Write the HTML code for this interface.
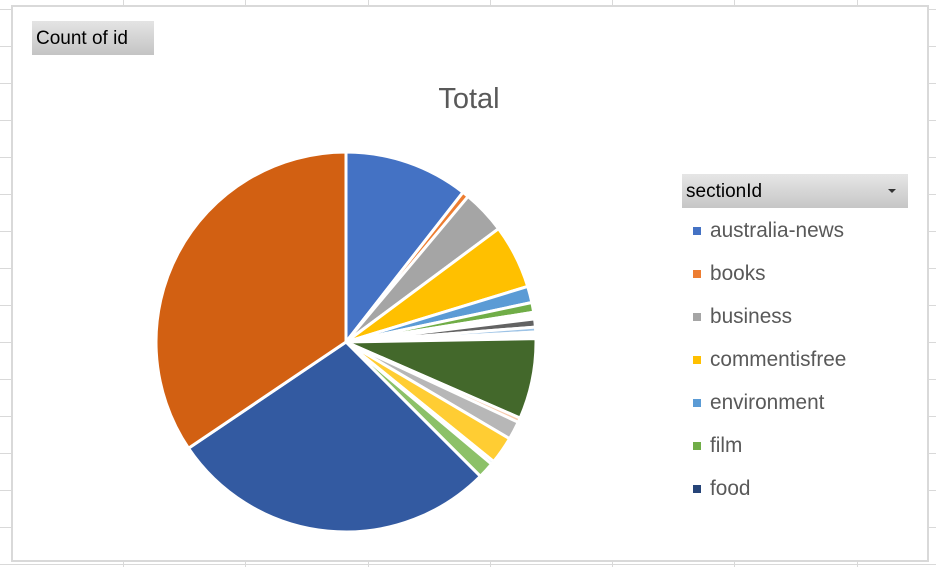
<!DOCTYPE html>
<html><head><meta charset="utf-8"><style>
html,body{margin:0;padding:0;background:#fff;}
body{width:936px;height:567px;position:relative;overflow:hidden;font-family:"Liberation Sans",sans-serif;}
.grid{position:absolute;left:0;top:0;}
.frame{position:absolute;left:11px;top:5px;width:914px;height:553px;border:2px solid #d9d9d9;background:#fff;}
.cnt{position:absolute;left:32px;top:21px;width:122px;height:34px;background:linear-gradient(#e4e4e4,#c4c4c4);font-size:19px;line-height:36px;padding-left:4px;box-sizing:border-box;color:#000;}
.title{position:absolute;left:369px;width:200px;text-align:center;top:83px;font-size:29px;color:#595959;}
.lh{position:absolute;left:682px;top:174px;width:226px;height:34px;background:linear-gradient(#e6e6e6,#c6c6c6);font-size:19px;line-height:35px;padding-left:4px;box-sizing:border-box;color:#000;}
.lh i{position:absolute;right:12px;top:15px;border-left:4px solid transparent;border-right:4px solid transparent;border-top:4px solid #333;}
.li{position:absolute;left:693px;font-size:20.8px;color:#595959;height:24px;line-height:24px;}
.li b{display:inline-block;width:8px;height:8px;margin-right:9px;vertical-align:middle;position:relative;top:-1px;}
</style></head><body>
<svg class="grid" width="936" height="567">
<g stroke="#d9d9d9" stroke-width="1">
<line x1="123.5" y1="0" x2="123.5" y2="567"/><line x1="245.5" y1="0" x2="245.5" y2="567"/><line x1="368.5" y1="0" x2="368.5" y2="567"/><line x1="490.5" y1="0" x2="490.5" y2="567"/><line x1="612.5" y1="0" x2="612.5" y2="567"/><line x1="734.5" y1="0" x2="734.5" y2="567"/><line x1="857.5" y1="0" x2="857.5" y2="567"/>
<line x1="0" y1="9.5" x2="936" y2="9.5"/><line x1="0" y1="46.5" x2="936" y2="46.5"/><line x1="0" y1="83.5" x2="936" y2="83.5"/><line x1="0" y1="120.5" x2="936" y2="120.5"/><line x1="0" y1="157.5" x2="936" y2="157.5"/><line x1="0" y1="194.5" x2="936" y2="194.5"/><line x1="0" y1="231.5" x2="936" y2="231.5"/><line x1="0" y1="268.5" x2="936" y2="268.5"/><line x1="0" y1="305.5" x2="936" y2="305.5"/><line x1="0" y1="342.5" x2="936" y2="342.5"/><line x1="0" y1="379.5" x2="936" y2="379.5"/><line x1="0" y1="416.5" x2="936" y2="416.5"/><line x1="0" y1="453.5" x2="936" y2="453.5"/><line x1="0" y1="490.5" x2="936" y2="490.5"/><line x1="0" y1="527.5" x2="936" y2="527.5"/><line x1="0" y1="564.5" x2="936" y2="564.5"/>
</g></svg>
<div class="frame"></div>
<div class="cnt">Count of id</div>
<div class="title">Total</div>
<svg style="position:absolute;left:0;top:0" width="936" height="567" id="pie"></svg>
<div class="lh">sectionId<i></i></div>
<div class="li" style="top:219px"><b style="background:#4472c4"></b>australia-news</div>
<div class="li" style="top:262px"><b style="background:#ed7d31"></b>books</div>
<div class="li" style="top:305px"><b style="background:#a5a5a5"></b>business</div>
<div class="li" style="top:348px"><b style="background:#ffc000"></b>commentisfree</div>
<div class="li" style="top:391px"><b style="background:#5b9bd5"></b>environment</div>
<div class="li" style="top:434px"><b style="background:#70ad47"></b>film</div>
<div class="li" style="top:477px"><b style="background:#264478"></b>food</div>
<script>
var s=[[0,38,"#4472c4"],[38,40,"#ed7d31"],[40,53.4,"#a5a5a5"],[53.4,73,"#ffc000"],[73,78,"#5b9bd5"],[78,81,"#70ad47"],[81,83,"#fff"],[83,85.5,"#636363"],[85.5,87,"#9dc3e6"],[87,89,"#fff"],[89,113.6,"#43682b"],[113.6,115,"#f8cbad"],[115,120.6,"#b7b7b7"],[120.6,129,"#ffcd33"],[129,130,"#bdd7ee"],[130,135,"#8cc168"],[135,236,"#335aa1"],[236,360,"#d26012"]];
var cx=346,cy=342,r=190,h="";
function p(a){a=a*Math.PI/180;return (cx+r*Math.sin(a)).toFixed(2)+" "+(cy-r*Math.cos(a)).toFixed(2);}
s.forEach(function(x){h+='<path d="M'+cx+' '+cy+' L'+p(x[0])+' A'+r+' '+r+' 0 '+((x[1]-x[0])>180?1:0)+' 1 '+p(x[1])+' Z" fill="'+x[2]+'" stroke="#fff" stroke-width="3" stroke-linejoin="round"/>';});
document.getElementById("pie").innerHTML=h;
</script>
</body></html>
